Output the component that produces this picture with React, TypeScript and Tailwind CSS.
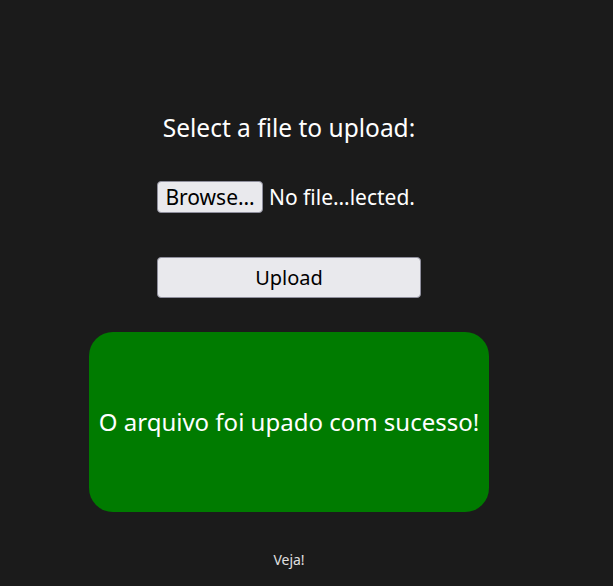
import React from 'react';

const App: React.FC = () => {
  return (
    <div className="min-h-screen w-full bg-[#1b1b1b] text-white font-['Noto_Sans',sans-serif]">
      <div className="w-[578px] flex flex-col items-center pt-[112px]">
        <h2 className="text-[24.5px] leading-[32px]">Select a file to upload:</h2>

        <div className="mt-[37px] flex items-center gap-[6px] w-[264px] whitespace-nowrap">
          <button className="h-[32px] w-[106px] bg-[#e9e9ed] text-black border border-[#8f8f9d] rounded-[4px] text-[21px] leading-none">
            Browse…
          </button>
          <span className="text-[21px] leading-none">No file…lected.</span>
        </div>

        <button className="mt-[44px] w-[264px] h-[41px] bg-[#e9e9ed] text-black border border-[#8f8f9d] rounded-[4px] text-[20px]">
          Upload
        </button>

        <div className="mt-[34px] w-[400px] h-[180px] bg-[#007b00] rounded-[24px] flex items-center justify-center">
          <span className="text-[24px] whitespace-nowrap">O arquivo foi upado com sucesso!</span>
        </div>

        <p className="mt-[37px] text-[14px] text-[#e0e0e0]">Veja!</p>
      </div>
    </div>
  );
};

export default App;
